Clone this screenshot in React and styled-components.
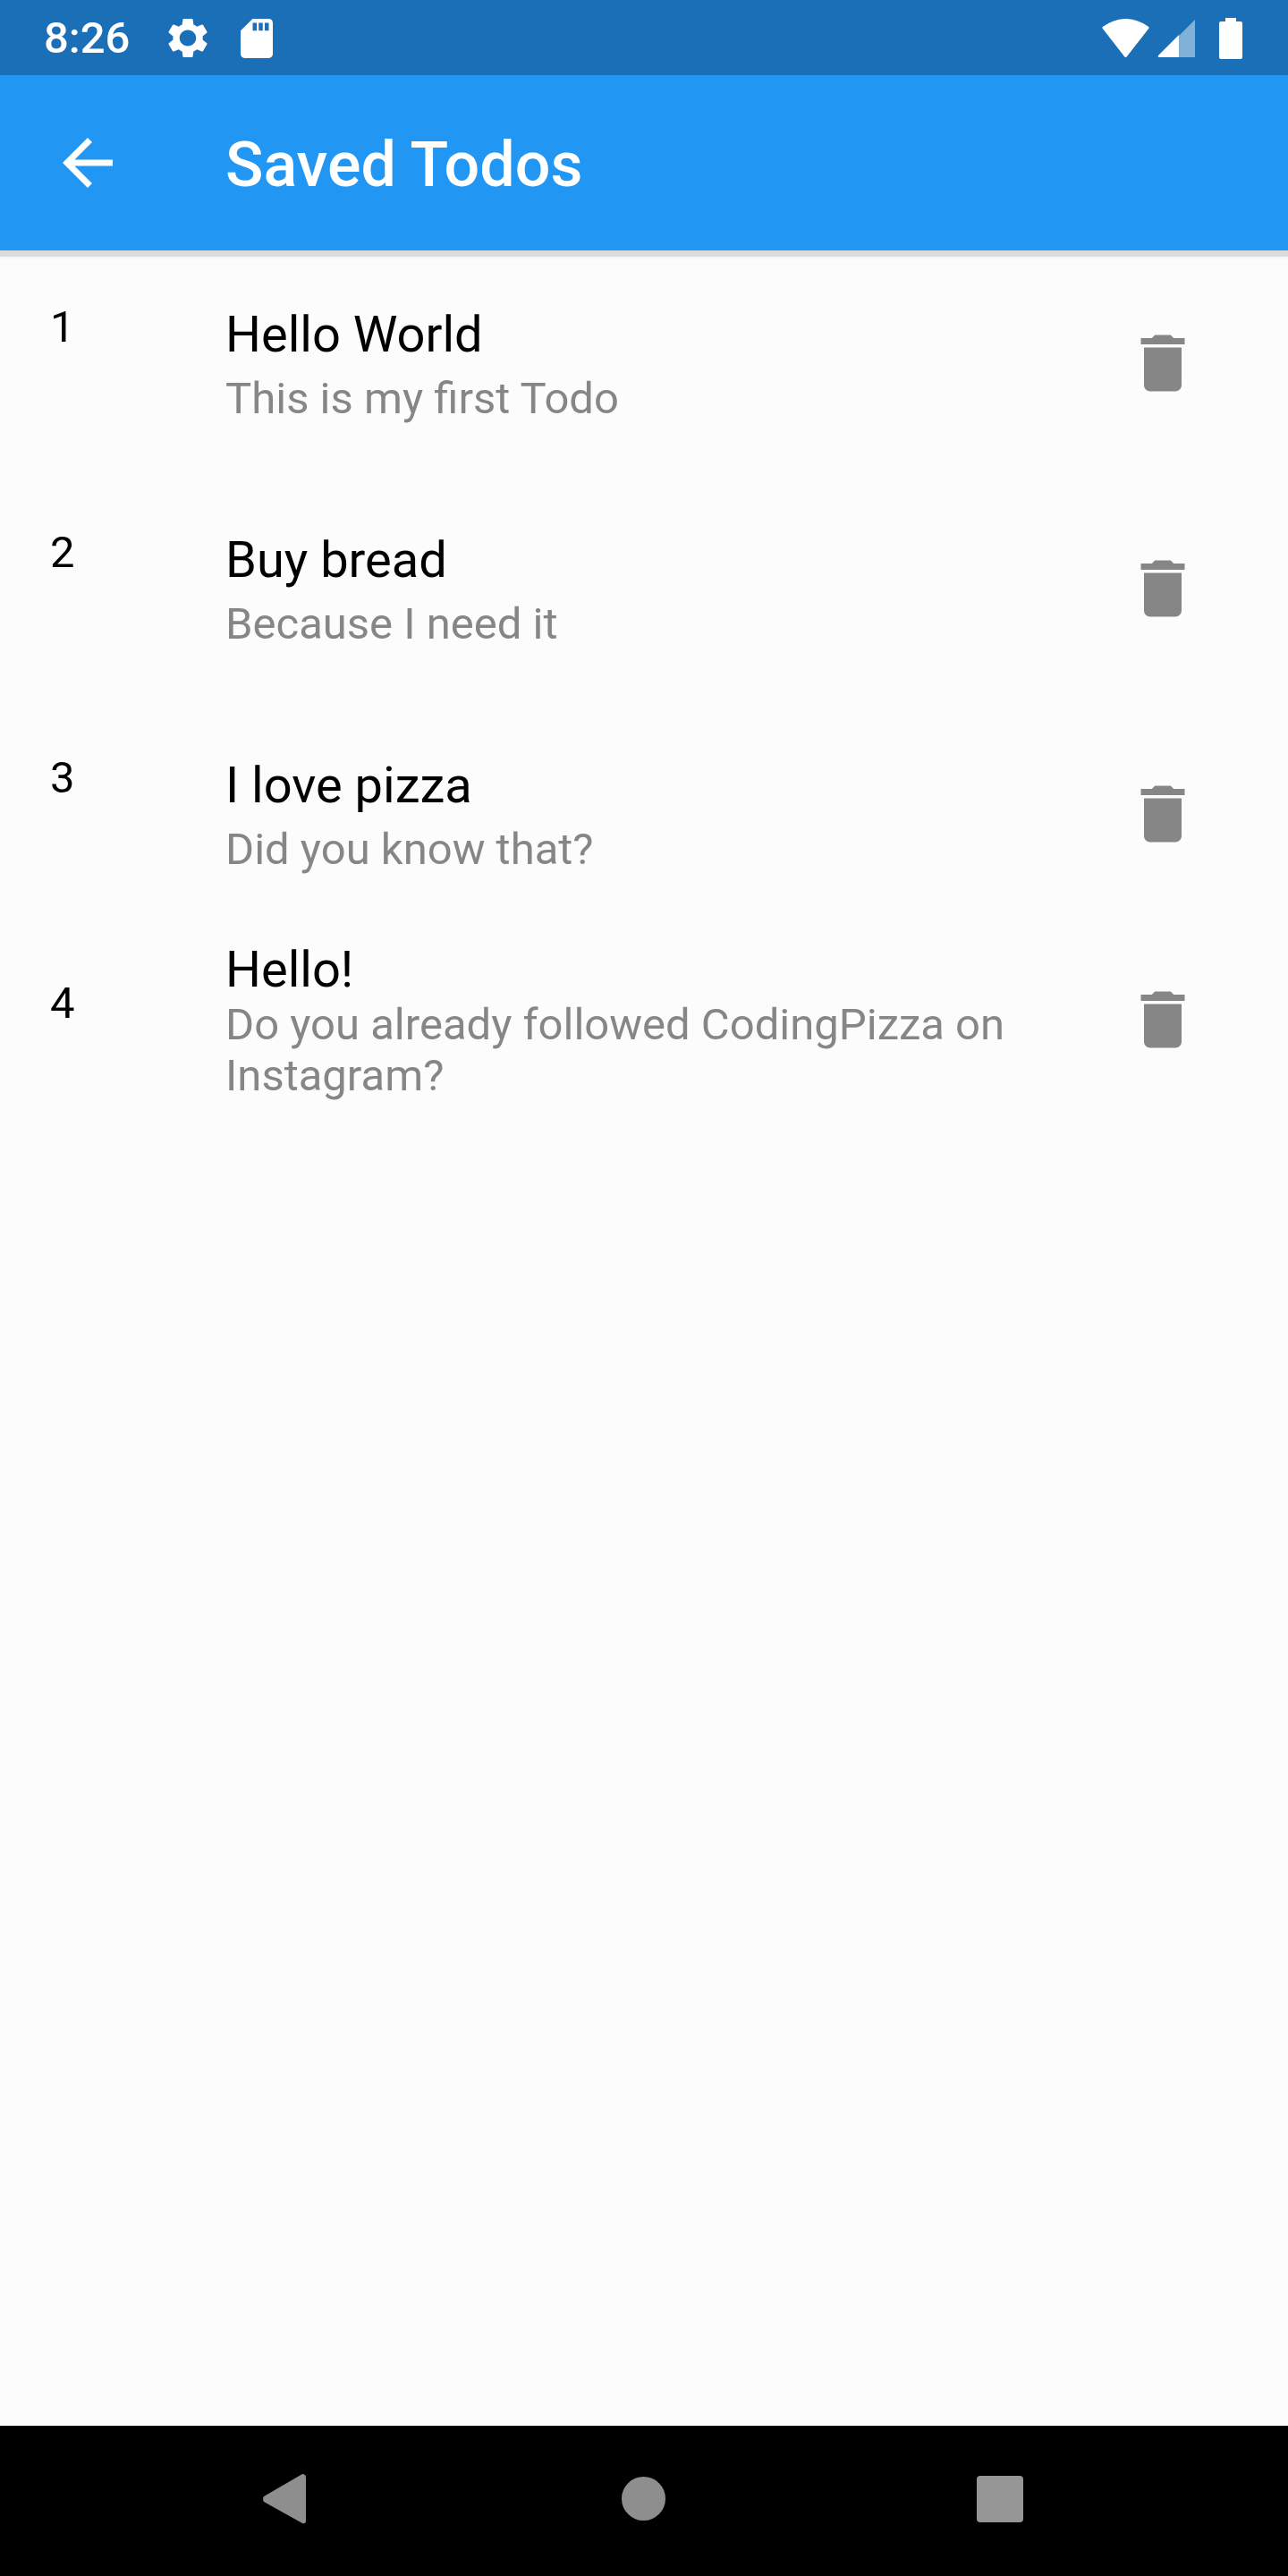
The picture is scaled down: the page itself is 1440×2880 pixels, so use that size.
import React from 'react'
import styled, { createGlobalStyle } from 'styled-components'

const GlobalStyle = createGlobalStyle`
  html, body { margin: 0; padding: 0; background: #fcfcfc; }
  body { font-family: Roboto, "Liberation Sans", sans-serif; }
`

const todos = [
  { id: 1, title: 'Hello World', text: 'This is my first Todo' },
  { id: 2, title: 'Buy bread', text: 'Because I need it' },
  { id: 3, title: 'I love pizza', text: 'Did you know that?' },
  { id: 4, title: 'Hello!', text: 'Do you already followed CodingPizza on Instagram?', wrapped: true },
]

function App() {
  return (
    <Screen>
      <GlobalStyle />
      <StatusBar>
        <Time>8:26</Time>
        <svg width="44" height="45" viewBox="2.5 2 19 20" preserveAspectRatio="none" fill="#fff" fillRule="evenodd">
          <path d="M19.14 12.94c.04-.3.06-.61.06-.94 0-.32-.02-.64-.07-.94l2.03-1.58c.18-.14.23-.41.12-.61l-1.92-3.32c-.12-.22-.37-.29-.59-.22l-2.39.96c-.5-.38-1.03-.7-1.62-.94l-.36-2.54c-.04-.24-.24-.41-.48-.41h-3.84c-.24 0-.43.17-.47.41l-.36 2.54c-.59.24-1.13.57-1.62.94l-2.39-.96c-.22-.08-.47 0-.59.22L2.74 8.87c-.12.21-.08.47.12.61l2.03 1.58c-.05.3-.09.63-.09.94s.02.64.07.94l-2.03 1.58c-.18.14-.23.41-.12.61l1.92 3.32c.12.22.37.29.59.22l2.39-.96c.5.38 1.03.7 1.62.94l.36 2.54c.05.24.24.41.48.41h3.84c.24 0 .44-.17.47-.41l.36-2.54c.59-.24 1.13-.56 1.62-.94l2.39.96c.22.08.47 0 .59-.22l1.92-3.32c.12-.22.07-.47-.12-.61l-2.01-1.58zM12 16c-2.2 0-4-1.8-4-4s1.8-4 4-4 4 1.8 4 4-1.8 4-4 4z" />
        </svg>
        <SdIcon width="36" height="44" viewBox="4 2 16 20" preserveAspectRatio="none" fill="#fff">
          <path d="M18 2h-8L4.02 8 4 20c0 1.1.9 2 2 2h12c1.1 0 2-.9 2-2V4c0-1.1-.9-2-2-2zm-6 6h-2V4h2v4zm3 0h-2V4h2v4zm3 0h-2V4h2v4z" />
        </SdIcon>
        <StatusRight>
          <svg width="53" height="43" viewBox="0 0 53 43" fill="#fff" stroke="#fff" strokeWidth="3" strokeLinejoin="round">
            <path d="M2 10Q26.5 -7 51 10L26.5 41.5Z" />
          </svg>
          <svg width="42" height="42" viewBox="0 0 42 42" fill="#fff">
            <path d="M42 0V42H24V18Z" fillOpacity="0.45" />
            <path d="M24 17V42H2Q0 42 1 40Z" />
          </svg>
          <BatteryIcon width="26" height="46" viewBox="0 0 26 46" fill="#fff">
            <rect x="7" y="0" width="12" height="6" />
            <rect x="0" y="4" width="26" height="42" rx="2" />
          </BatteryIcon>
        </StatusRight>
      </StatusBar>

      <AppBar>
        <BackIcon width="84" height="84" viewBox="0 0 24 24" fill="#fff">
          <path d="M20 11H7.83l5.59-5.59L12 4l-8 8 8 8 1.41-1.41L7.83 13H20v-2z" />
        </BackIcon>
        <PageTitle>Saved Todos</PageTitle>
      </AppBar>

      <TodoList>
        {todos.map((todo) => (
          <TodoRow key={todo.id} $wrapped={todo.wrapped}>
            <TodoNumber>{todo.id}</TodoNumber>
            <TodoBody $wrapped={todo.wrapped}>
              <TodoTitle>{todo.title}</TodoTitle>
              <TodoText $wrapped={todo.wrapped}>{todo.text}</TodoText>
            </TodoBody>
            <DeleteButton aria-label="delete">
              <svg width="84" height="84" viewBox="0 0 24 24" fill="#868686">
                <path d="M6 19c0 1.1.9 2 2 2h8c1.1 0 2-.9 2-2V7H6v12zM19 4h-3.5l-1-1h-5l-1 1H5v2h14V4z" />
              </svg>
            </DeleteButton>
          </TodoRow>
        ))}
      </TodoList>

      <NavBar>
        <svg width="49" height="56" viewBox="0 0 49 56" fill="#8e8e8e">
          <path d="M45 0Q49 0 49 4V52Q49 56 45 55L2 31Q0 28 2 25Z" />
        </svg>
        <HomeKey />
        <RecentKey />
      </NavBar>
    </Screen>
  )
}

const Screen = styled.div`
  height: 2880px;
  display: flex;
  flex-direction: column;
  background: #fcfcfc;
`

const StatusBar = styled.div`
  height: 84px;
  flex: none;
  display: flex;
  align-items: center;
  padding: 1px 51px 0 49px;
  box-sizing: border-box;
  background: #1a6fb6;
`

const Time = styled.span`
  margin-right: 43px;
  font-size: 49px;
  font-weight: 500;
  line-height: 57px;
  color: #fff;
`

const SdIcon = styled.svg`
  margin-left: 37px;
`

const StatusRight = styled.div`
  margin-left: auto;
  display: flex;
  align-items: center;
  gap: 9px;
`

const BatteryIcon = styled.svg`
  margin-left: 18px;
`

const AppBar = styled.header`
  position: relative;
  z-index: 1;
  height: 196px;
  flex: none;
  display: flex;
  align-items: center;
  padding-left: 56px;
  background: #2196f3;
  box-shadow: 0 7px 0 #dcdcdc, 0 9px 4px rgba(0, 0, 0, 0.03);
`

const BackIcon = styled.svg`
  margin-right: 112px;
`

const PageTitle = styled.h1`
  margin: 3px 0 0;
  font-size: 70px;
  font-weight: 500;
  line-height: 82px;
  color: #fff;
`

const TodoList = styled.main`
  flex: 1;
`

const TodoRow = styled.div`
  min-height: ${(p) => (p.$wrapped ? '208px' : '252px')};
  display: flex;
  padding: 0 56px;
`

const TodoNumber = styled.div`
  width: 196px;
  flex: none;
  margin-top: 57px;
  font-size: 49px;
  line-height: 57px;
  color: #000;
`

const TodoBody = styled.div`
  flex: 1;
  padding: ${(p) => (p.$wrapped ? '15px 0 13px' : '61px 0 0')};
`

const TodoTitle = styled.div`
  font-size: 56px;
  line-height: 66px;
  color: #000;
`

const TodoText = styled.div`
  margin-top: ${(p) => (p.$wrapped ? '0' : '10px')};
  font-size: 49px;
  line-height: 57px;
  color: #868686;
`

const DeleteButton = styled.button`
  flex: none;
  align-self: center;
  width: 168px;
  height: 168px;
  display: flex;
  align-items: center;
  justify-content: center;
  padding: 0;
  border: none;
  background: none;
`

const NavBar = styled.nav`
  height: 168px;
  flex: none;
  display: grid;
  grid-template-columns: 402px 397px 52px;
  align-items: center;
  padding: 0 0 5px 293px;
  box-sizing: border-box;
  background: #000;
`

const HomeKey = styled.div`
  width: 49px;
  height: 49px;
  border-radius: 50%;
  background: #8e8e8e;
`

const RecentKey = styled.div`
  width: 52px;
  height: 52px;
  border-radius: 4px;
  background: #969696;
`

export default App
